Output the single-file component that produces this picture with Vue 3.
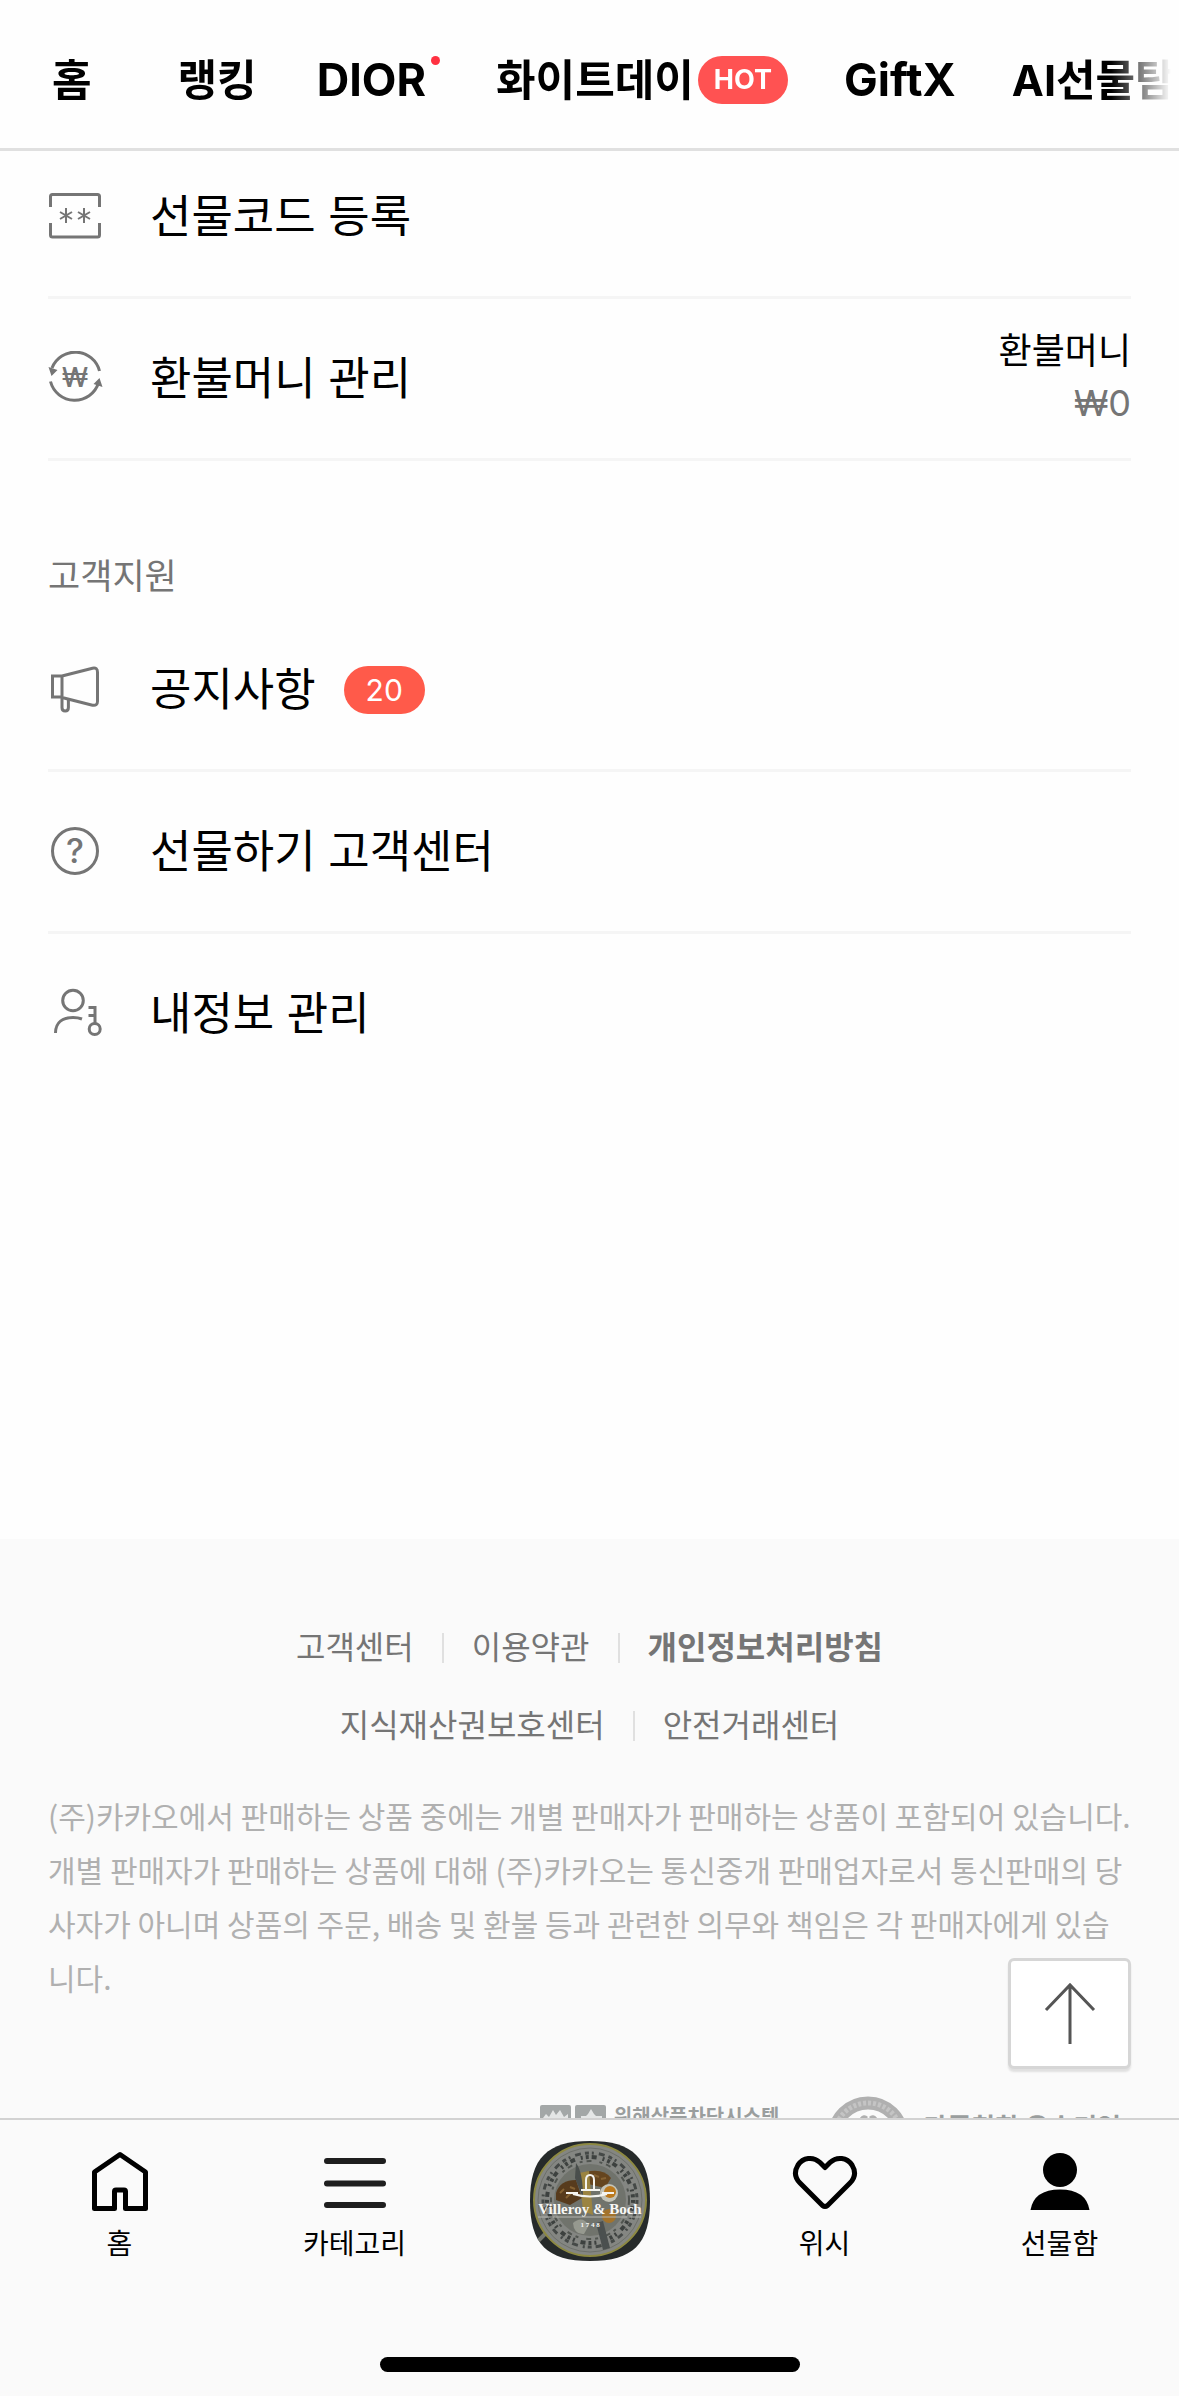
<template>
  <div class="app">
    <header class="top">
      <nav class="top-nav">
        <a
          v-for="tab in topTabs"
          :key="tab.label"
          href="#"
          class="top-link"
          :class="{
            'top-link--home': tab.home,
            'top-link--latin': tab.latin,
            'top-link--new': tab.isNew,
          }"
        >
          <span>{{ tab.label }}</span>
          <span v-if="tab.isNew" class="dot"></span>
          <span v-if="tab.badge" class="hot">{{ tab.badge }}</span>
        </a>
      </nav>
    </header>

    <main class="content">
      <div class="scroll">
        <ul class="menu">
          <li>
            <a href="#" class="row">
              <svg class="row-icon" viewBox="0 0 56 56">
                <path d="M2.5 18V7.500q0-2 2-2h45q2 0 2 2V18M2.500 34v12q0 2 2 2h45q2 0 2-2V34" />
                <path class="thin" d="M18 19v15M12 23l12 7M24 23l-12 7M36 19v15M30 23l12 7M42 23l-12 7" />
              </svg>
              <span class="row-label">선물코드 등록</span>
            </a>
          </li>
          <li>
            <a href="#" class="row">
              <svg class="row-icon" viewBox="0 0 56 56">
                <path d="M4 17A25 25 0 0 1 51.500 20M2.500 30.500A25 25 0 0 0 50.500 32" />
                <path class="solid" d="M0.500 16l9 3-6 6zM51.500 27l3 9-9-3z" />
                <text class="glyph" x="27" y="36" font-size="27">₩</text>
              </svg>
              <span class="row-label">환불머니 관리</span>
              <span class="money">
                <span class="money-label">환불머니</span>
                <span class="money-value">₩0</span>
              </span>
            </a>
          </li>
        </ul>

        <h2 class="section-title">고객지원</h2>
        <ul class="menu">
          <li>
            <a href="#" class="row">
              <svg class="row-icon" viewBox="0 0 56 56">
                <path d="M14 14H4.500v21H14zM14 14L44.500 6.200q5-1 5 4v29q0 5-5 4L14 35.500" />
                <path d="M14 35.500V45.500q0 3.500 3.200 3.500t3.200-3.500V37" />
              </svg>
              <span class="row-label">공지사항</span>
              <span class="count">20</span>
            </a>
          </li>
          <li>
            <a href="#" class="row">
              <svg class="row-icon" viewBox="0 0 56 56">
                <circle cx="27" cy="27" r="22.500" />
                <text class="glyph" x="27" y="39" font-size="34">?</text>
              </svg>
              <span class="row-label">선물하기 고객센터</span>
            </a>
          </li>
          <li>
            <a href="#" class="row row--last">
              <svg class="row-icon" viewBox="0 0 56 56">
                <circle cx="25" cy="14.500" r="10.300" />
                <path d="M7.500 47C7.500 36 15 31.500 25 31.500q5 0 9 1.500" />
                <circle cx="46.700" cy="43" r="5.500" />
                <path d="M47 37.500V21.500H40.500M47 29.500H40.500" />
              </svg>
              <span class="row-label">내정보 관리</span>
            </a>
          </li>
        </ul>

        <footer class="footer">
          <div v-for="(group, i) in footerLinks" :key="i" class="footer-links">
            <a
              v-for="link in group"
              :key="link.label"
              href="#"
              :class="{ strong: link.strong }"
              >{{ link.label }}</a
            >
          </div>
          <p class="notice">
            (주)카카오에서 판매하는 상품 중에는 개별 판매자가 판매하는 상품이 포함되어 있습니다.<br />
            개별 판매자가 판매하는 상품에 대해 (주)카카오는 통신중개 판매업자로서 통신판매의 당<br />
            사자가 아니며 상품의 주문, 배송 및 환불 등과 관련한 의무와 책임은 각 판매자에게 있습<br />
            니다.
          </p>
          <div class="marks">
            <div class="mark mark--block">
              <svg class="mark-tiles" viewBox="0 0 66 32">
                <rect width="31" height="32" rx="2" />
                <rect x="35" width="31" height="32" rx="2" />
                <path d="M3 13l3-4 3 3 4-7 3 5 4-5 4 7 4-3v12H3zM41 11h5l2-2 3-5 3 5 2 2h6v12H41z" />
              </svg>
              <span>위해상품차단시스템</span>
            </div>
            <div class="mark mark--seal">
              <svg class="seal" viewBox="0 0 82 82">
                <circle class="seal-ring" cx="41" cy="41" r="34" />
                <circle class="seal-text" cx="41" cy="41" r="34" />
                <path d="M34 23q3-4 6-1M43 22q3-3 6 1" />
              </svg>
              <span>가족친화 우수기업</span>
            </div>
          </div>
        </footer>
      </div>

      <button type="button" class="to-top" aria-label="맨 위로">
        <svg viewBox="0 0 52 64">
          <path d="M26 62V3M2 28L26 3l24 25" />
        </svg>
      </button>
    </main>

    <nav class="tabbar">
      <a href="#" class="tab">
        <svg class="tab-icon" viewBox="0 0 68 64">
          <path d="M34 4.500L8.500 22v36.500h20V41.500q0-1.500 1.500-1.500h8q1.500 0 1.500 1.500v17h20V22z" />
        </svg>
        <span>홈</span>
      </a>
      <a href="#" class="tab">
        <svg class="tab-icon tab-icon--soft" viewBox="0 0 68 64">
          <path d="M6 11h56M6 33.500h56M6 55h56" />
        </svg>
        <span>카테고리</span>
      </a>
      <a href="#" class="tab tab--brand" aria-label="Villeroy &amp; Boch">
        <svg class="brand" viewBox="0 0 120 120">
          <defs>
            <clipPath id="squircle">
              <path d="M60 0C103 0 120 17 120 60S103 120 60 120 0 103 0 60 17 0 60 0z" />
            </clipPath>
          </defs>
          <g clip-path="url(#squircle)">
            <rect width="120" height="120" fill="#262a2a" />
            <path d="M0 108L30 78" stroke="#74776f" stroke-width="4" />
            <circle cx="60" cy="59" r="56" fill="#848682" stroke="#8d8942" stroke-width="2" />
            <circle cx="60" cy="59" r="52" fill="none" stroke="#6d706a" stroke-width="1" />
            <circle cx="60" cy="59" r="47" fill="none" stroke="#454947" stroke-width="3" stroke-dasharray="4 3 2 5 6 4" />
            <circle cx="60" cy="59" r="43" fill="none" stroke="#3d413f" stroke-width="4" stroke-dasharray="3 3 5 6 2 3" />
            <circle cx="60" cy="59" r="39" fill="none" stroke="#50544f" stroke-width="2" stroke-dasharray="5 8 3 4" />
            <circle cx="60" cy="59" r="36" fill="#70736c" />
            <path d="M26 52q4-13 20-13l6 18-12 7-14-5z" fill="#573b1d" />
            <path d="M56 31q17-4 25 6l-6 10-21-5z" fill="#65451f" />
            <path d="M30 52l4-4M36 57l5-5M40 46l5 2M64 34l5 2M71 38l5-1" stroke="#856233" stroke-width="2" />
            <path d="M49 32l10-2 4 44-10-4z" fill="#9b8441" />
            <path d="M46 22q7 9 7 35l-8-20z" fill="#494e4c" />
            <circle cx="79" cy="52" r="9" fill="#c4c4b8" />
            <circle cx="80" cy="51" r="6" fill="#bb791d" />
            <circle cx="79" cy="75" r="7" fill="#a3732b" />
            <path d="M43 82q9-8 16 2l-5 9q-10 1-11-11z" fill="#96998f" />
            <path d="M66 82l7-2 7 27-7 2z" fill="#4b504f" />
            <path d="M56 48V39q0-5 4-5t4 5v9M51 49h19M43 53q17 5 34 0M36 52h12M72 52h12" fill="none" stroke="#f4f4f0" stroke-width="2" />
            <text class="brand-name" x="60" y="73" font-size="15">Villeroy &amp; Boch</text>
            <path d="M8 76h103" stroke="#b4b5af" stroke-width="1" />
            <text class="brand-name" x="60" y="86" font-size="7">1 7 4 8</text>
          </g>
        </svg>
      </a>
      <a href="#" class="tab">
        <svg class="tab-icon" viewBox="0 0 68 64">
          <path d="M34 17.500L29 12.500C22 6 12 7.500 7 15Q1 25 9 33L31.500 55.500q2.500 2 5 0L59 33Q67 25 61 15C56 7.500 46 6 39 12.500z" />
        </svg>
        <span>위시</span>
      </a>
      <a href="#" class="tab">
        <svg class="tab-icon tab-icon--fill" viewBox="0 0 68 64">
          <circle cx="34" cy="20" r="17" />
          <path d="M4.500 60Q8 39.500 34 39.500T63.500 60z" />
        </svg>
        <span>선물함</span>
      </a>
      <div class="home-indicator"></div>
    </nav>
  </div>
</template>

<script setup>
const topTabs = [
  { label: "홈", home: true },
  { label: "랭킹" },
  { label: "DIOR", latin: true, isNew: true },
  { label: "화이트데이", badge: "HOT" },
  { label: "GiftX", latin: true },
  { label: "AI선물탐색" },
];

const footerLinks = [
  [
    { label: "고객센터" },
    { label: "이용약관" },
    { label: "개인정보처리방침", strong: true },
  ],
  [{ label: "지식재산권보호센터" }, { label: "안전거래센터" }],
];
</script>

<style>
body {
  margin: 0;
  background: #fefefe;
}
</style>

<style scoped>
.app {
  display: flex;
  flex-direction: column;
  height: 100vh;
  overflow: hidden;
  color: #000;
  font-family: "Inter", "Noto Sans CJK KR", sans-serif;
}

a {
  color: inherit;
  text-decoration: none;
}

.top {
  position: relative;
  z-index: 1;
  flex: none;
  border-bottom: 3px solid #e0e0e0;
  background: #fefefe;
}

.top-nav {
  display: flex;
  align-items: center;
  gap: 56px;
  height: 148px;
  padding: 11px 0 0 20px;
  box-sizing: border-box;
  overflow: hidden;
  white-space: nowrap;
  mask-image: linear-gradient(to left, transparent 8px, #000 68px);
}

.top-link {
  position: relative;
  display: flex;
  flex: none;
  align-items: center;
  gap: 4px;
  font-size: 43px;
  font-weight: 700;
  line-height: 60px;
}

.top-link--home {
  padding: 0 30px 0 32px;
}

.top-link--latin {
  font-size: 45px;
}

.top-link--new {
  padding: 0 14px 0 4px;
}

.dot {
  position: absolute;
  top: 6px;
  right: 0;
  width: 9px;
  height: 9px;
  border-radius: 50%;
  background: #ff3141;
}

.hot {
  padding: 0 16px;
  border-radius: 24px;
  background: #ff5252;
  color: #fff;
  font-size: 27px;
  line-height: 48px;
}

.content {
  position: relative;
  flex: 1;
  min-height: 0;
  overflow: hidden;
}

.scroll {
  margin-top: -14px;
}

.menu {
  margin: 0;
  padding: 0 48px;
  list-style: none;
}

.row {
  display: flex;
  align-items: center;
  height: 162px;
  box-sizing: border-box;
  border-bottom: 3px solid #f5f5f5;
}

.row--last {
  border-bottom-color: transparent;
}

.row-icon {
  flex: none;
  width: 56px;
  height: 56px;
  margin-right: 46px;
  fill: none;
  stroke: #757575;
  stroke-width: 3;
}

.row-icon .thin {
  stroke-width: 2;
}

.row-icon .solid,
.row-icon .glyph {
  fill: #757575;
  stroke: none;
}

.glyph {
  font-weight: 500;
  text-anchor: middle;
}

.row-label {
  font-size: 45px;
  line-height: 60px;
}

.count {
  margin-left: 28px;
  padding: 0 22px;
  border-radius: 24px;
  background: #ff5a4a;
  color: #fff;
  font-size: 30px;
  line-height: 48px;
}

.money {
  display: flex;
  flex-direction: column;
  margin-left: auto;
  padding-bottom: 4px;
  font-size: 36px;
  line-height: 52px;
  text-align: right;
}

.money-value {
  color: #757575;
}

.section-title {
  margin: 0;
  padding: 92px 48px 11px;
  color: #757575;
  font-size: 35px;
  font-weight: 400;
  line-height: 46px;
}

.footer {
  margin-top: 443px;
  padding: 70px 48px 60px;
  background: #fafafa;
}

.footer-links {
  display: flex;
  justify-content: center;
  color: #757575;
  font-size: 32px;
  line-height: 78px;
}

.footer-links a {
  display: flex;
  align-items: center;
}

.footer-links a + a::before {
  content: "";
  width: 2px;
  height: 30px;
  margin: 0 28px;
  background: #e0e0e0;
}

.footer-links .strong {
  font-weight: 700;
}

.notice {
  margin: 23px 0 0;
  color: #b0b0b0;
  font-family: "Noto Sans CJK KR", sans-serif;
  font-size: 30px;
  line-height: 54px;
  white-space: nowrap;
}

.marks {
  display: flex;
  justify-content: flex-end;
  gap: 48px;
  margin-top: 92px;
  padding-right: 10px;
  color: #9a9e9e;
  font-weight: 700;
}

.mark {
  display: flex;
  align-items: flex-start;
}

.mark--block {
  gap: 8px;
  padding-top: 9px;
  font-size: 20px;
  line-height: 24px;
}

.mark--seal {
  gap: 14px;
  font-size: 26px;
  line-height: 64px;
}

.mark-tiles {
  width: 66px;
  height: 32px;
  fill: #a3a7a7;
}

.mark-tiles path {
  fill: #e4e6e6;
}

.seal {
  width: 82px;
  height: 82px;
  fill: none;
  stroke: #b0b0b0;
  stroke-width: 3;
}

.seal-ring {
  stroke-width: 13;
}

.seal-text {
  stroke: #c4c4c4;
  stroke-width: 5;
  stroke-dasharray: 3 2;
}

.to-top {
  position: absolute;
  right: 48px;
  bottom: 49px;
  display: flex;
  align-items: center;
  justify-content: center;
  width: 123px;
  height: 111px;
  padding: 0;
  border: 3px solid #d6d6d6;
  border-radius: 6px;
  background: #fff;
  box-shadow: 0 3px 2px #e0e0e0;
}

.to-top svg {
  width: 52px;
  height: 64px;
  fill: none;
  stroke: #555;
  stroke-width: 3;
}

.tabbar {
  position: relative;
  display: flex;
  flex: none;
  height: 278px;
  padding: 0 2px;
  box-sizing: border-box;
  border-top: 2px solid #d2d2d2;
  background: #fafafa;
}

.tab {
  display: flex;
  flex: 1;
  flex-direction: column;
  align-items: center;
  padding-top: 30px;
  font-size: 28px;
  line-height: 40px;
}

.tab--brand {
  padding-top: 21px;
}

.tab-icon {
  width: 68px;
  height: 64px;
  margin-bottom: 10px;
  fill: none;
  stroke: #000;
  stroke-width: 5;
  stroke-linejoin: round;
  stroke-linecap: round;
}

.tab-icon--soft {
  stroke: #1e1e1e;
  stroke-width: 6;
}

.tab-icon--fill {
  fill: #000;
  stroke: none;
}

.brand {
  width: 120px;
  height: 120px;
}

.brand-name {
  fill: #f7f7f5;
  font-family: "Liberation Serif", serif;
  font-weight: 700;
  text-anchor: middle;
}

.home-indicator {
  position: absolute;
  bottom: 24px;
  left: 50%;
  width: 420px;
  height: 15px;
  margin-left: -210px;
  border-radius: 8px;
  background: #000;
}
</style>
